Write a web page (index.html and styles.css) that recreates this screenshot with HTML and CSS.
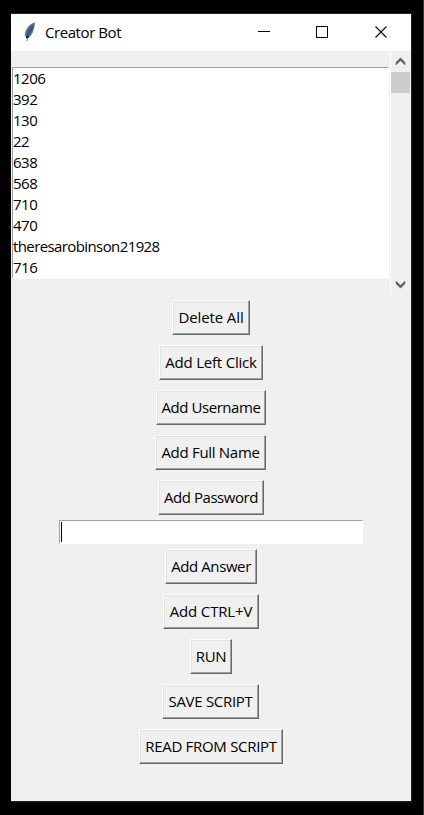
FILE: index.html
```html
<!DOCTYPE html>
<html lang="en">
<head>
<meta charset="utf-8">
<title>Creator Bot</title>
<link rel="stylesheet" href="styles.css">
</head>
<body>
<main class="window">
  <header class="titlebar">
    <svg class="feather" width="14" height="21" viewBox="0 0 14 21">
      <path d="M11.500 1C7 2 3 7 2.300 13l1.800 3 3-2.200C10 10 11 6 11.500 1Z" fill="#3e6596" stroke="#777b7b" stroke-width="1.2"/>
      <path d="M10 4C7.500 8 5 11 4.200 16" fill="none" stroke="#233d5e" stroke-width=".8"/>
      <path d="M4.200 14v5" stroke="#8c7c6c" stroke-width="1"/>
      <path d="M3 14h2.500v2H3z" fill="#171717"/>
    </svg>
    <h1 class="title">Creator Bot</h1>
    <svg class="controls" width="138" height="37" viewBox="0 0 138 37" fill="none" stroke="#000" shape-rendering="crispEdges">
      <path d="M-15 17.500h12M43.500 12.500h11v11h-11z"/>
      <path d="M102.500 12.500l11 11M113.500 12.500l-11 11" shape-rendering="auto" stroke-width="1.1"/>
    </svg>
  </header>
  <section class="list-area">
    <ul class="list">
      <li>1206</li><li>392</li><li>130</li><li>22</li><li>638</li>
      <li>568</li><li>710</li><li>470</li><li class="user">theresarobinson21928</li><li>716</li>
    </ul>
    <div class="scrollbar">
      <svg width="20" height="21" viewBox="0 0 20 21"><path d="M5 11.200l4.500-4.500 4.500 4.500v2.700l-4.500-4.200L5 13.900Z" fill="#606060" stroke="#606060" stroke-width=".4"/></svg>
      <div class="thumb"></div>
      <svg width="20" height="21" viewBox="0 0 20 21"><path d="M5 7v2.700l4.500 4.500L14 9.700V7l-4.500 4.200Z" fill="#606060" stroke="#606060" stroke-width=".4"/></svg>
    </div>
  </section>
  <section class="actions">
    <button class="delete">Delete All</button>
    <button class="click">Add Left Click</button>
    <button class="username">Add Username</button>
    <button class="fullname">Add Full Name</button>
    <button class="password">Add Password</button>
    <div class="entry"><span class="caret"></span></div>
    <button class="answer">Add Answer</button>
    <button class="paste">Add CTRL+V</button>
    <button class="run">RUN</button>
    <button class="save">SAVE SCRIPT</button>
    <button class="read">READ FROM SCRIPT</button>
  </section>
</main>
</body>
</html>
```

FILE: styles.css
```css
* { box-sizing: border-box; }
body {
  margin: 0;
  height: 815px;
  padding: 13px 0 0 11px;
  background: #000;
  border-right: 1px solid #333;
  color: #000;
  font: 15px/21px "Open Sans", "Noto Sans", sans-serif;
  overflow: hidden;
}
.window {
  width: 401px;
  height: 789px;
  background: #f0f0f0;
  border: 1px solid #222;
  border-left: 0;
}
.titlebar { display: flex; height: 37px; background: #fff; }
.feather { margin: 8px 0 0 12px; }
.title {
  margin: 8px 0 0 8px;
  width: 80px;
  font: inherit;
  white-space: nowrap;
  letter-spacing: -.43px;
}
.controls { margin-left: auto; overflow: visible; }
.list-area { display: flex; justify-content: space-between; height: 244px; }
.list {
  width: 377px;
  height: 212px;
  margin: 16px 0 0 1px;
  padding: 0;
  list-style: none;
  background: #fff;
  border: 1px solid #fff;
  border-top-color: #a0a0a0;
  border-left-color: #a0a0a0;
  letter-spacing: -.5px;
}
.user { letter-spacing: -.6px; }
.scrollbar {
  display: flex;
  flex-direction: column;
  width: 21px;
  border-left: 1px solid #fff;
}
.scrollbar svg { display: block; flex: none; }
.scrollbar svg:last-child { margin-top: auto; }
.thumb { width: 19px; height: 21px; background: #cdcdcd; }
.actions {
  display: flex;
  flex-direction: column;
  align-items: center;
  padding-top: 5px;
}
button {
  flex: none;
  height: 35px;
  margin: 0 0 10px;
  padding: 0;
  display: flex;
  align-items: center;
  justify-content: center;
  background: #f0f0f0;
  border: 1px solid;
  border-color: #fff #696969 #696969 #fff;
  box-shadow: inset -1px -1px #a0a0a0, inset 1px 1px #e3e3e3;
  color: #000;
  font: inherit;
  white-space: nowrap;
}
.delete { width: 78px; letter-spacing: -.1px; }
.click { width: 104px; letter-spacing: -.2px; }
.username { width: 110px; letter-spacing: -.45px; }
.fullname { width: 111px; margin-right: 1px; letter-spacing: -.3px; }
.password { width: 106px; margin-bottom: 5px; letter-spacing: -.45px; }
.answer { width: 92px; letter-spacing: -.4px; }
.paste { width: 96px; letter-spacing: -.15px; }
.run { width: 42px; letter-spacing: -.3px; }
.save { width: 97px; margin-right: 1px; letter-spacing: -.3px; }
.read { width: 144px; letter-spacing: -.3px; }
.entry {
  width: 304px;
  height: 24px;
  margin-bottom: 5px;
  padding: 1px;
  background: #fff;
  border: 1px solid #fff;
  border-top-color: #a0a0a0;
  border-left-color: #a0a0a0;
}
.caret { display: block; width: 1px; height: 20px; background: #000; }
```
